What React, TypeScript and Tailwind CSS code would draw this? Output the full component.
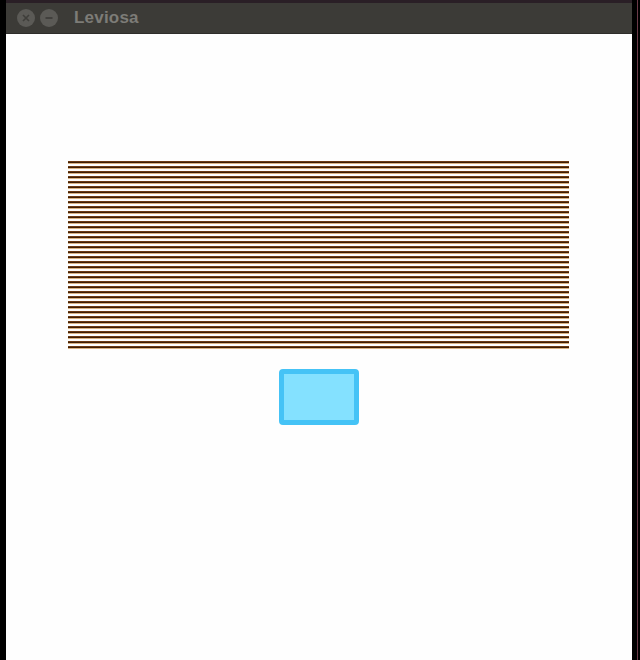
const stripes = Array.from({ length: 38 });

function TitleButton({ kind }: { kind: "close" | "min" }) {
  return (
    <div className="w-[18px] h-[18px] rounded-full bg-[#5b5a56] flex items-center justify-center">
      <svg width="10" height="10" viewBox="0 0 10 10">
        {kind === "close" ? (
          <path d="M2 2 L8 8 M8 2 L2 8" stroke="#3f3e3a" strokeWidth="1.6" />
        ) : (
          <path d="M1.5 5 H8.5" stroke="#3f3e3a" strokeWidth="1.8" />
        )}
      </svg>
    </div>
  );
}

export default function App() {
  return (
    <div className="w-[640px] h-[660px] bg-black flex overflow-hidden font-['Liberation_Sans',sans-serif]">
      <div className="w-[6px] shrink-0 bg-black" />
      <div className="w-[626px] flex flex-col">
        {/* Title bar */}
        <div className="h-[3px] bg-[#2a1f26]" />
        <div className="h-[31px] bg-[#3c3b37] flex items-center px-[11px] gap-[5px] border-b border-[#2e2d2a]">
          <TitleButton kind="close" />
          <TitleButton kind="min" />
          <span className="ml-[11px] text-[17px] font-bold text-[#7d7c77] tracking-[0.2px]">
            Leviosa
          </span>
        </div>

        {/* Canvas */}
        <div className="flex-1 bg-[#fefefe] flex flex-col items-center">
          <div className="mt-[127px] ml-[-1px] w-[501px] flex flex-col">
            {stripes.map((_, i) => (
              <div key={i} className="h-[5px] flex flex-col">
                <div className="h-[1px] bg-[#6b3a12]" />
                <div className="h-[1px] bg-[#3d1d05]" />
                <div className="h-[1px] bg-[#d9b283]" />
              </div>
            ))}
          </div>
          <div className="mt-[18px] w-[80px] h-[56px] rounded-[4px] border-[5px] border-[#45c3f6] bg-[#84e1ff]" />
        </div>
      </div>
      <div className="w-[5px] shrink-0 bg-black" />
      <div className="w-[1px] shrink-0 bg-[#6b3a48]" />
      <div className="w-[2px] shrink-0 bg-black" />
    </div>
  );
}
